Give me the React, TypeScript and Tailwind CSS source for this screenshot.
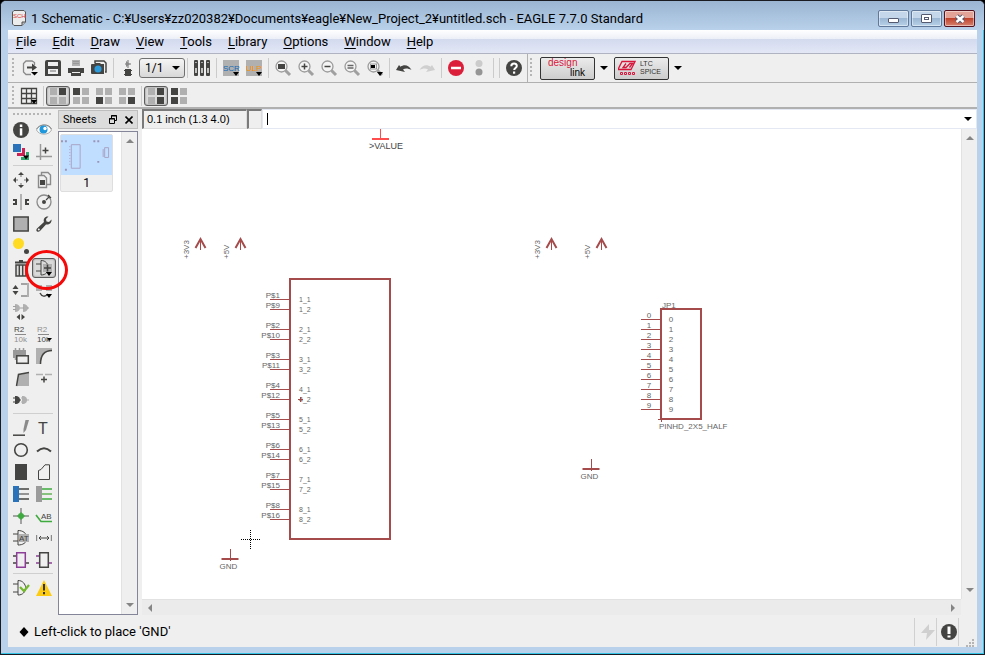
import { Fragment, type ReactNode } from "react";
import { clsx } from "clsx";

const DARK = "#444442";
const GRAY = "#b0b0b0";
const MID = "#8a8a8a";
const RED = "#a54b4b";
const GREEN = "#3faa3f";
const BLUE = "#2a72ba";
const PURPLE = "#8d3f97";

const menus = ["File", "Edit", "Draw", "View", "Tools", "Library", "Options", "Window", "Help"];

function Icon({ children }: { children: ReactNode }) {
  return (
    <svg viewBox="0 0 16 16" className="block size-4 shrink-0 overflow-visible" fill="none" aria-hidden="true">
      {children}
    </svg>
  );
}

function MoreArrow() {
  return <path d="M10 12h6l-3 4z" fill="#000" />;
}

function IconText({
  x,
  y,
  size,
  fill,
  children,
}: {
  x: number;
  y: number;
  size: number;
  fill: string;
  children: string;
}) {
  return (
    <text x={x} y={y} fontSize={size} fill={fill} fontFamily="Liberation Sans, sans-serif">
      {children}
    </text>
  );
}

function Lens({ children }: { children?: ReactNode }) {
  return (
    <Icon>
      <path d="M10.500 10.500l4.500 4.500" stroke="#a0a0a0" strokeWidth="3" />
      <circle cx="6.500" cy="6.500" r="5.500" fill="#f4f4f4" stroke="#9c9c9c" strokeWidth="1.300" />
      {children}
    </Icon>
  );
}

function Quad({ dark }: { dark: number[] }) {
  const cells = [
    [0, 0],
    [9, 0],
    [0, 9],
    [9, 9],
  ];
  return (
    <Icon>
      {cells.map(([x, y], i) => (
        <rect key={i} x={x} y={y} width="7" height="7" fill={dark.includes(i) ? DARK : GRAY} />
      ))}
    </Icon>
  );
}

const ic = {
  open: (
    <Icon>
      <path d="M12.500 5V2.500L10 1H4L1.500 3.500V12L4 14.500H9" stroke={MID} strokeWidth="1.300" />
      <path d="M5 6.500h5V3.500L15 7.500L10 11V8.500H5z" fill={DARK} />
      <path d="M9 12h7l-3.500 3.500z" fill="#000" />
    </Icon>
  ),
  save: (
    <Icon>
      <path d="M2 0h12a2 2 0 0 1 2 2v14H0V2a2 2 0 0 1 2-2z" fill={DARK} />
      <path d="M3 2h10v4H3zM3 9h10v5H3z" fill="#efefef" />
      <path d="M5 11h6" stroke={GRAY} strokeWidth="2" />
    </Icon>
  ),
  print: (
    <Icon>
      <path d="M4 0h8v6H4z" fill={GRAY} />
      <path d="M5 1.500h6M5 3.500h6" stroke="#999" />
      <path d="M0 8h16v5H0z" fill={DARK} />
      <path d="M3 11h10v5H3z" fill={DARK} />
      <path d="M4 12.500h8" stroke="#efefef" />
    </Icon>
  ),
  camera: (
    <Icon>
      <path d="M4 3V1h9l2 2v9h-1" stroke={DARK} strokeWidth="1.500" />
      <path d="M1 4h2l1-1h5l1 1h3v10H1a1 1 0 0 1-1-1V5a1 1 0 0 1 1-1z" fill={DARK} />
      <circle cx="7" cy="9" r="3.500" fill="#2c9bdc" />
    </Icon>
  ),
  chip: (
    <Icon>
      <path d="M8 0v8M5 4h6" stroke={GRAY} strokeWidth="2" />
      <path d="M6 1l4 3l-4 3z" fill={MID} />
      <path d="M5 9h6v7H5z" fill={DARK} />
      <path d="M4 10.500h8M4 14.500h8" stroke={DARK} />
    </Icon>
  ),
  library: (
    <Icon>
      {[0, 6, 12].map((x) => (
        <g key={x}>
          <rect x={x} width="4" height="16" rx="1" fill={DARK} />
          <path d={`M${x + 2} 8v5`} stroke="#eee" strokeWidth="1.500" />
          <path d={`M${x + 1} 2.500h2`} stroke="#aaa" />
        </g>
      ))}
    </Icon>
  ),
  script: (
    <Icon>
      <rect width="16" height="16" fill={GRAY} />
      <IconText x={0} y={11} size={8} fill="#1468b4">SCR</IconText>
      <MoreArrow />
    </Icon>
  ),
  ulp: (
    <Icon>
      <rect width="16" height="16" fill={GRAY} />
      <IconText x={0} y={11} size={8} fill="#ff9100">ULP</IconText>
      <MoreArrow />
    </Icon>
  ),
  zoomFit: (
    <Lens>
      <rect x="3" y="4" width="7" height="5" fill={DARK} />
    </Lens>
  ),
  zoomIn: (
    <Lens>
      <path d="M3.500 6.500h6M6.500 3.500v6" stroke={DARK} strokeWidth="1.500" />
    </Lens>
  ),
  zoomOut: (
    <Lens>
      <path d="M3.500 6.500h6" stroke={DARK} strokeWidth="1.500" />
    </Lens>
  ),
  redraw: (
    <Lens>
      <path d="M3.500 5.500h6M3.500 8h6" stroke="#666" strokeWidth="1.300" />
    </Lens>
  ),
  zoomSelect: (
    <Lens>
      <rect x="3.500" y="4" width="6" height="5" stroke="#999" />
      <rect x="4" y="5" width="4" height="3" fill="#000" />
      <MoreArrow />
    </Lens>
  ),
  undo: (
    <Icon>
      <path d="M0 8l3-5l1.500 1.800C8 2 13 3 15.500 8C12 6 9 6 7 7.500L9 10z" fill={DARK} transform="translate(0 2)" />
    </Icon>
  ),
  redo: (
    <Icon>
      <path d="M16 8l-3-5l-1.500 1.800C8 2 3 3 .5 8C4 6 7 6 9 7.500L7 10z" fill="#cfcfcf" transform="translate(0 2)" />
    </Icon>
  ),
  stop: (
    <Icon>
      <circle cx="8" cy="8" r="8" fill="#db1f3a" />
      <path d="M3 8h10" stroke="#fff" strokeWidth="2.500" />
    </Icon>
  ),
  go: (
    <Icon>
      <circle cx="8" cy="3.500" r="3.500" fill="#cbcbcb" />
      <circle cx="8" cy="12" r="3.500" fill="#959595" />
    </Icon>
  ),
  help: (
    <Icon>
      <circle cx="8" cy="8" r="8" fill={DARK} />
      <path d="M5.300 6.200C5.300 2.500 11 2.700 10.800 6C10.700 8 8.200 8 8.200 10" stroke="#fff" strokeWidth="2" />
      <rect x="7" y="11.500" width="2.200" height="2.200" fill="#fff" />
    </Icon>
  ),
  grid: (
    <Icon>
      <path d="M.5.5h15v15H.5zM5.500 0v16M10.500 0v16M0 5.500h16M0 10.500h16" stroke={DARK} strokeWidth="1.300" />
      <path d="M10 12h6l-3 4z" fill="#000" />
    </Icon>
  ),
  info: (
    <Icon>
      <circle cx="8" cy="8" r="8" fill={DARK} />
      <rect x="6.800" y="2.500" width="2.500" height="2.500" fill="#fff" />
      <rect x="6.800" y="6.300" width="2.500" height="7.200" fill="#fff" />
    </Icon>
  ),
  eye: (
    <Icon>
      <path d="M.5 8C3 1.500 13 1.500 15.500 8C13 13.500 3 13.500 .5 8z" fill="#fff" stroke="#aaa" />
      <path d="M.5 7C4 1.500 13 1.500 15.500 7" stroke="#888" />
      <circle cx="7.500" cy="7.500" r="4" fill="#1f97dc" />
      <circle cx="9" cy="6.500" r="1.700" fill="#fff" />
    </Icon>
  ),
  layers: (
    <Icon>
      <rect width="8" height="8" fill={BLUE} />
      <path d="M9 4h3v4h0v4H4V9h5z" fill="#cc2254" />
      <path d="M13 8h3v8H8v-3h5z" fill="#2ea56c" />
      <path d="M10 11.500h6l-3 4z" fill="#000" />
    </Icon>
  ),
  mark: (
    <Icon>
      <path d="M4.500 0v16M0 12.500h16" stroke="#999" strokeWidth="1.500" />
      <path d="M6.500 6.500h6M9.500 3.500v6" stroke={DARK} strokeWidth="1.500" />
    </Icon>
  ),
  move: (
    <Icon>
      <path d="M8 0l3 3H5zM8 16l3-3H5zM0 8l3-3v6zM16 8l-3-3v6z" fill={DARK} />
      <path d="M8 3v2M8 11v2M3 8h2M11 8h2" stroke={GRAY} strokeWidth="2" />
    </Icon>
  ),
  copy: (
    <Icon>
      <path d="M5.500 3V.5H12L14.500 3v9.500H11" stroke={MID} strokeWidth="1.400" />
      <path d="M2.500 3.500H8L10.500 6v9.500h-8z" fill="#efefef" stroke={MID} strokeWidth="1.400" />
      <rect x="4" y="8" width="5" height="5" fill={DARK} />
    </Icon>
  ),
  mirror: (
    <Icon>
      <path d="M8 0v16" stroke={MID} strokeWidth="1.200" />
      <path d="M0 5h4v6H0V9h2V7H0zM16 5h-4v6h4V9h-2V7h2z" fill={DARK} />
    </Icon>
  ),
  rotate: (
    <Icon>
      <circle cx="8" cy="8" r="7" stroke={MID} strokeWidth="1.300" />
      <circle cx="8" cy="8" r="2" fill={DARK} />
      <path d="M10 6l4-4M12 1l3 3" stroke={DARK} strokeWidth="1.200" />
    </Icon>
  ),
  group: (
    <Icon>
      <rect x=".8" y="1" width="14.400" height="14" fill={GRAY} stroke={DARK} strokeWidth="1.500" />
    </Icon>
  ),
  change: (
    <Icon>
      <path d="M15.500 3.500L13 6L10.500 5.500L10 3L12.500.5C9 0 7 3 8 6L1 12.500C-1 15 2 17 4 15L10 8.500C13 9 16 7 15.500 3.500z" fill={DARK} />
      <circle cx="2.800" cy="13.400" r="1" fill="#eee" />
    </Icon>
  ),
  paste: (
    <Icon>
      <circle cx="5.500" cy="5.500" r="5.500" fill="#ffdc23" />
      <circle cx="13.500" cy="13.500" r="2.500" fill={DARK} />
    </Icon>
  ),
  trash: (
    <Icon>
      <path d="M2 2.500h12M6 1h4" stroke={DARK} strokeWidth="2" />
      <path d="M3 5h10v11H3z" fill="#ddd" stroke={DARK} strokeWidth="1.500" />
      <path d="M6.300 5v11M9.700 5v11" stroke={DARK} strokeWidth="1.400" />
    </Icon>
  ),
  add: (
    <Icon>
      <path d="M0 4h5M0 11h5M5 .5C10 .5 12 4 12.500 8C12 12 10 15 5 15z" stroke={DARK} />
      <rect x="7" y="4" width="9" height="8" fill={GRAY} />
      <path d="M8 8h7M11.500 4.500v7" stroke={DARK} strokeWidth="1.600" />
      <MoreArrow />
    </Icon>
  ),
  pinswap: (
    <Icon>
      <path d="M2.500 3l3 4h-6zM2.500 13l3-4h-6z" fill={DARK} />
      <path d="M8 2h6M8 14h6" stroke={MID} strokeWidth="1.600" />
      <path d="M15 1v14" stroke={GRAY} strokeWidth="2" />
    </Icon>
  ),
  replace: (
    <Icon>
      <path d="M0 3h6v6H0zM10 3h6v6h-6z" fill={GRAY} />
      <path d="M4 11c2 4 5 4 8 1" stroke={DARK} strokeWidth="1.500" />
      <MoreArrow />
    </Icon>
  ),
  gateswap: (
    <Icon>
      <path d="M2 0c3 0 5 2 5 4s-2 4-5 4zM10 0c3 0 5 2 5 4s-2 4-5 4z" fill={GRAY} />
      <path d="M0 2.500h3M0 5.500h3M7 4h4M14 4h2" stroke="#a0a0a0" />
      <path d="M3.500 13l3.500-3v6zM12 13l-3.500-3v6z" fill={DARK} />
    </Icon>
  ),
  name: (
    <Icon>
      <IconText x={1} y={6} size={8} fill={DARK}>R2</IconText>
      <path d="M2 8.500h11" stroke={MID} />
      <IconText x={1} y={16} size={8} fill="#909090">10k</IconText>
    </Icon>
  ),
  value: (
    <Icon>
      <IconText x={1} y={6} size={8} fill="#909090">R2</IconText>
      <path d="M2 8.500h11" stroke={MID} />
      <IconText x={1} y={16} size={8} fill={DARK}>10k</IconText>
      <path d="M11 12h5l-2.500 3z" fill="#000" />
    </Icon>
  ),
  smash: (
    <Icon>
      <path d="M0 2h13v8H0z" fill="#999" />
      <path d="M2.500 0v12M6.500 0v12M10.500 0v4" stroke="#999" strokeWidth="1.500" />
      <rect x="3.800" y="7.800" width="11.500" height="7.500" fill="#eee" stroke={DARK} strokeWidth="1.500" />
    </Icon>
  ),
  miter: (
    <Icon>
      <path d="M0 0h16v3C8 3 5 8 5 16H0z" fill={GRAY} />
      <path d="M4.500 16C4.500 8 8 2.500 16 2.500" stroke={DARK} strokeWidth="1.500" />
    </Icon>
  ),
  split: (
    <Icon>
      <path d="M4 16L6 5l10-2v13z" fill={GRAY} />
      <path d="M3.500 16L5.500 4.500L16 2.500" stroke={DARK} strokeWidth="1.500" />
    </Icon>
  ),
  invoke: (
    <Icon>
      <path d="M0 4.500h7M9 4.500h7" stroke={GRAY} strokeWidth="1.300" />
      <path d="M5 9.500h6M8 6.500v6" stroke={DARK} strokeWidth="1.500" />
    </Icon>
  ),
  gates: (
    <Icon>
      <path d="M2 4c4 0 5 2 5 4s-1 4-5 4z" fill={DARK} />
      <path d="M0 6h3M0 10h3M6 8h2" stroke={DARK} strokeWidth="1.200" />
      <path d="M9 4c4 0 5 2 5 4s-1 4-5 4z" fill={GRAY} />
      <path d="M8 6h3M8 10h3M13 8h3" stroke={GRAY} strokeWidth="1.200" />
    </Icon>
  ),
  line: (
    <Icon>
      <path d="M0 15.200h12" stroke={DARK} strokeWidth="1.500" />
      <path d="M12.500 0h3.500l-3 10l-2.500 3v-4z" fill={MID} />
    </Icon>
  ),
  text: (
    <Icon>
      <IconText x={2} y={14} size={16} fill={DARK}>T</IconText>
    </Icon>
  ),
  circle: (
    <Icon>
      <circle cx="8" cy="8" r="6.300" stroke={DARK} strokeWidth="1.600" />
    </Icon>
  ),
  arc: (
    <Icon>
      <path d="M1 9.500Q8 3 15 9.500" stroke={DARK} strokeWidth="2" />
    </Icon>
  ),
  rect: (
    <Icon>
      <path d="M2 0h12v16H2z" fill={DARK} />
    </Icon>
  ),
  polygon: (
    <Icon>
      <path d="M2.500 15.500V6.500L5 5.500L9 .8H13.500V15.500z" stroke={DARK} />
    </Icon>
  ),
  bus: (
    <Icon>
      <path d="M0 0h6v16H0z" fill={BLUE} />
      <path d="M6 3h10M6 13h10" stroke={DARK} strokeWidth="1.400" />
      <path d="M6 8h10" stroke={MID} strokeWidth="1.800" />
    </Icon>
  ),
  net: (
    <Icon>
      <path d="M0 0h6v16H0z" fill="#9b9b9b" />
      <path d="M6 3h10M6 13h10" stroke={GREEN} strokeWidth="1.400" />
      <path d="M6 8h10" stroke="#7cbd72" strokeWidth="1.800" />
    </Icon>
  ),
  junction: (
    <Icon>
      <path d="M0 8h16M8 0v16" stroke={MID} strokeWidth="1.500" />
      <path d="M8 4v8M4 8h8" stroke={GREEN} />
      <circle cx="8" cy="8" r="3" fill={GREEN} />
    </Icon>
  ),
  label: (
    <Icon>
      <path d="M0 7L5 13.500H16" stroke={GREEN} strokeWidth="1.600" />
      <IconText x={5} y={11} size={8} fill={DARK}>AB</IconText>
    </Icon>
  ),
  attribute: (
    <Icon>
      <path d="M0 4h5M0 11h5M5 .5C10 .5 13 3 15 8C13 13 10 15 5 15z" stroke={DARK} />
      <path d="M6 4h10v8H6z" fill={GRAY} />
      <IconText x={6} y={11} size={8} fill={DARK}>AT</IconText>
    </Icon>
  ),
  dimension: (
    <Icon>
      <path d="M.6 5v6M15.400 5v6" stroke={MID} strokeWidth="1.200" />
      <path d="M3 8h10M5 6L3 8l2 2M11 6l2 2l-2 2" stroke={DARK} />
    </Icon>
  ),
  module: (
    <Icon>
      <path d="M3.700.8h8.600v14.400H3.700z" stroke={PURPLE} strokeWidth="1.500" />
      <path d="M0 4h3M0 11h3M13 11h3" stroke={DARK} strokeWidth="1.500" />
    </Icon>
  ),
  port: (
    <Icon>
      <path d="M3.700.8h8.600v14.400H3.700z" stroke={DARK} strokeWidth="1.500" />
      <path d="M0 4h3M0 11h3M13 11h3" stroke={PURPLE} strokeWidth="1.500" />
    </Icon>
  ),
  erc: (
    <Icon>
      <path d="M0 4h5M0 12h5M5 .5C10 .5 12 4 13 8C12 12 10 15 5 15z" stroke={DARK} />
      <path d="M7 7l4 4l5-6" stroke="#74b82c" strokeWidth="2.200" />
    </Icon>
  ),
  errors: (
    <Icon>
      <path d="M8 0L16 16H0z" fill="#fdcb12" />
      <path d="M8 4v6.500M8 12v2.300" stroke="#333" strokeWidth="2" />
    </Icon>
  ),
};

type IconName = keyof typeof ic;

const fileTools: (IconName | "|" | "select")[] = [
  "open", "save", "print", "camera", "|", "chip", "select", "|", "library", "|",
  "script", "ulp", "|", "zoomFit", "zoomIn", "zoomOut", "redraw", "zoomSelect", "|",
  "undo", "redo", "|", "stop", "go", "|", "|", "help",
];

const sideTools: (IconName | null)[][][] = [
  [["info", "eye"], ["layers", "mark"]],
  [
    ["move", "copy"],
    ["mirror", "rotate"],
    ["group", "change"],
    ["paste", null],
    ["trash", "add"],
    ["pinswap", "replace"],
    ["gateswap", null],
    ["name", "value"],
    ["smash", "miter"],
    ["split", "invoke"],
    ["gates", null],
  ],
  [
    ["line", "text"],
    ["circle", "arc"],
    ["rect", "polygon"],
    ["bus", "net"],
    ["junction", "label"],
    ["attribute", "dimension"],
    ["module", "port"],
  ],
  [["erc", "errors"]],
];

function ToolButton({
  label,
  pressed,
  children,
}: {
  label: string;
  pressed?: boolean;
  children: ReactNode;
}) {
  return (
    <button
      type="button"
      aria-label={label}
      aria-pressed={pressed}
      className={clsx(
        "shrink-0",
        pressed &&
          "-mx-1 rounded-[3px] border border-[#5c5c5c] bg-[#dadada] px-[3px] py-px shadow-[inset_0_0_2px_#777]",
      )}
    >
      {children}
    </button>
  );
}

function Separator() {
  return <span className="-mx-px h-5 w-px shrink-0 bg-[#cbcbcb]" />;
}

function Grip() {
  return (
    <span className="h-5 w-[2px] shrink-0 bg-[repeating-linear-gradient(#b5b5b5_0_2px,transparent_2px_4px)]" />
  );
}

function Caret({ className }: { className?: string }) {
  return (
    <svg viewBox="0 0 8 4" className={clsx("h-1 w-2 shrink-0", className)} aria-hidden="true">
      <path d="M0 0h8L4 4z" fill="currentColor" />
    </svg>
  );
}

function TitleBar() {
  const button =
    "flex h-[17px] w-[31px] items-center justify-center rounded-[2px] border shadow-[inset_0_0_0_1px_rgba(255,255,255,0.45)]";
  const blue =
    "border-[#60789a] bg-[linear-gradient(#c3d6ea_50%,#9bb7d3_50%,#b7d0e8)]";
  return (
    <header className="flex h-[29px] shrink-0 items-center bg-linear-to-b from-[#9ab4d2] to-[#b9d1ea] pr-[9px] pl-[11px]">
      <svg viewBox="0 0 14 16" className="mt-1 h-4 w-[14px] shrink-0 overflow-visible" aria-hidden="true">
        <path d="M2 .5h10l1.500 1.500V12L10 15.500H2L.5 14V2z" fill="#ececec" stroke="#555" />
        <path d="M10 15.500V12h3.500" fill="#bbb" stroke="#555" />
        <text x="1" y="8" fontSize="6" fill="#d83a3a" fontFamily="Liberation Sans, sans-serif">
          SCH
        </text>
      </svg>
      <h1 className="ml-[5px] flex-1 truncate pt-[6px] text-[13px] leading-5">
        1 Schematic - C:¥Users¥zz020382¥Documents¥eagle¥New_Project_2¥untitled.sch - EAGLE 7.7.0 Standard
      </h1>
      <div className="mt-[6px] flex gap-[2px]">
        <button type="button" aria-label="Minimize" className={clsx(button, blue)}>
          <span className="mt-1 h-[5px] w-[11px] rounded-[1px] border border-[#555a70] bg-white" />
        </button>
        <button type="button" aria-label="Maximize" className={clsx(button, blue)}>
          <span className="flex h-[9px] w-[11px] items-center justify-center rounded-[1px] border border-[#555a70] bg-white">
            <span className="h-[3px] w-[5px] border border-[#555a70]" />
          </span>
        </button>
        <button
          type="button"
          aria-label="Close"
          className={clsx(button, "border-[#56131f] bg-[linear-gradient(#e3a397_50%,#c0422b_50%,#d68370)]")}
        >
          <svg viewBox="0 0 12 10" className="h-[10px] w-3" aria-hidden="true">
            <path d="M2.500 2l7 6M9.500 2l-7 6" stroke="#555a70" strokeWidth="4.500" />
            <path d="M2.500 2l7 6M9.500 2l-7 6" stroke="#fff" strokeWidth="2.500" />
          </svg>
        </button>
      </div>
    </header>
  );
}

function MenuBar() {
  return (
    <nav className="flex h-6 shrink-0 gap-4 border-b border-[#b0b4c2] bg-[linear-gradient(#fff,#eceff7_9px,#d3daee_9px,#e3e7f6)] pl-2">
      {menus.map((menu) => (
        <button key={menu} type="button" className="text-[13px] leading-6">
          <span className="underline underline-offset-2">{menu[0]}</span>
          {menu.slice(1)}
        </button>
      ))}
    </nav>
  );
}

function FileToolbar() {
  const brand =
    "h-[23px] w-[55px] rounded-[2px] border border-[#333] bg-linear-to-b from-[#ebebeb] to-[#cdcdcd] font-['Liberation_Sans',sans-serif]";
  return (
    <div className="flex h-[29px] shrink-0 items-center border-b border-[#b0b0b0] pl-1">
      <Grip />
      <div className="ml-2 flex items-center gap-[7px]">
        {fileTools.map((tool, i) => {
          if (tool === "|") return <Separator key={i} />;
          if (tool === "select") {
            return (
              <div key={i} className="relative -mx-1 flex items-center">
                <select
                  aria-label="Sheet"
                  className="h-5 w-[46px] appearance-none rounded-[3px] border border-[#707070] bg-linear-to-b from-[#f5f5f5] to-[#d8d8d8] pl-[5px] text-xs leading-4"
                >
                  <option>1/1</option>
                </select>
                <Caret className="pointer-events-none absolute right-[5px]" />
              </div>
            );
          }
          return (
            <ToolButton key={i} label={tool}>
              {ic[tool]}
            </ToolButton>
          );
        })}
      </div>
      <span className="mr-[2px] ml-[5px] h-full w-px bg-[#b0b0b0]" />
      <Grip />
      <button type="button" className={clsx(brand, "ml-2 pl-[7px] text-left text-[10px]")}>
        <span className="block leading-[10px] text-[#d8163c]">design</span>
        <span className="block pl-[22px] leading-[10px]">link</span>
      </button>
      <button type="button" aria-label="Design link options" className="ml-[5px]">
        <Caret />
      </button>
      <button type="button" className={clsx(brand, "ml-[6px] flex items-center gap-1 pl-[3px] text-left text-[7px] text-[#333]")}>
        <svg viewBox="0 0 18 16" className="h-4 w-[18px] shrink-0" fill="none" stroke="#d8163c" aria-hidden="true">
          <path d="M4 1.500h13l-4 8H0zM8 3.500L5 7.500h3l4-4h2.500l-3 4" strokeWidth="1.300" />
          <path d="M2.500 12.500h2v2h-2zM6.500 12.500h2v2h-2zM10.500 12.500h2v2h-2zM14.500 12.500h2v2h-2z" />
        </svg>
        <span>
          <span className="block leading-[8px]">LTC</span>
          <span className="block leading-[8px]">SPICE</span>
        </span>
      </button>
      <button type="button" aria-label="LTC Spice options" className="ml-[5px]">
        <Caret />
      </button>
    </div>
  );
}

function GridToolbar() {
  return (
    <div className="flex h-[26px] shrink-0 items-center border-b-2 border-[#b0b0b0] pt-[2px] pl-1">
      <Grip />
      <div className="ml-[7px] flex items-center gap-[7px]">
        <ToolButton label="grid">{ic.grid}</ToolButton>
        <Separator />
        <ToolButton label="Quadrant 1" pressed>
          <Quad dark={[1]} />
        </ToolButton>
        <ToolButton label="Quadrant 2">
          <Quad dark={[0]} />
        </ToolButton>
        <ToolButton label="Quadrant 3">
          <Quad dark={[2]} />
        </ToolButton>
        <ToolButton label="Quadrant 4">
          <Quad dark={[3]} />
        </ToolButton>
        <Separator />
        <ToolButton label="Right half" pressed>
          <Quad dark={[1, 3]} />
        </ToolButton>
        <ToolButton label="Left half">
          <Quad dark={[0, 2]} />
        </ToolButton>
      </div>
    </div>
  );
}

function SideToolbar() {
  return (
    <aside className="w-[50px] shrink-0 px-[5px] pt-1">
      <div className="mb-1 h-[2px] bg-[repeating-linear-gradient(90deg,#b5b5b5_0_2px,transparent_2px_4px)]" />
      {sideTools.map((group, g) => (
        <Fragment key={g}>
          {g > 0 && <hr className="mt-[2px] mb-[3px] border-[#cfcfcf]" />}
          {group.map((row, r) => (
            <div key={r} className="flex h-[22px] items-center gap-[7px]">
              {row.map((tool) => {
                if (!tool) return null;
                if (tool !== "add") {
                  return (
                    <ToolButton key={tool} label={tool}>
                      {ic[tool]}
                    </ToolButton>
                  );
                }
                return (
                  <div key={tool} className="relative flex">
                    <ToolButton label={tool} pressed>
                      {ic.add}
                    </ToolButton>
                    <span className="pointer-events-none absolute -top-2 -left-[11px] z-10 h-10 w-[43px] rounded-[50%] border-3 border-[#f50a0a]" />
                  </div>
                );
              })}
            </div>
          ))}
        </Fragment>
      ))}
    </aside>
  );
}

function ScrollArrow({ d }: { d: string }) {
  return (
    <svg viewBox="0 0 8 8" className="size-2" aria-hidden="true">
      <path d={d} fill="#858585" />
    </svg>
  );
}

function VerticalScroll() {
  return (
    <div className="flex w-4 shrink-0 flex-col items-center justify-between border-l border-[#e2e2e2] bg-[#efefef] py-[5px]">
      <ScrollArrow d="M0 6h8L4 2z" />
      <ScrollArrow d="M0 2h8L4 6z" />
    </div>
  );
}

function SheetsPanel() {
  return (
    <section className="flex w-20 shrink-0 flex-col">
      <div className="mt-px flex h-[19px] items-center border border-[#bdbdbd] bg-[#dcdcdc] pr-1 pl-1">
        <h2 className="flex-1 text-[11px] leading-4">Sheets</h2>
        <button type="button" aria-label="Float" className="mr-2">
          <svg viewBox="0 0 8 9" className="h-[9px] w-2" fill="none" stroke="#000" aria-hidden="true">
            <path d="M2.500 3V.5h5v5H6M2 1h6" />
            <path d="M.5 3.500h5v5h-5zM0 4h6" />
          </svg>
        </button>
        <button type="button" aria-label="Close sheets">
          <svg viewBox="0 0 8 8" className="size-2" stroke="#000" strokeWidth="1.600" aria-hidden="true">
            <path d="M.5.5l7 7M7.500.5l-7 7" />
          </svg>
        </button>
      </div>
      <div className="mt-[2px] flex flex-1 justify-between border border-[#85859a] bg-white">
        <button type="button" className="mt-[2px] ml-px h-[58px] w-[53px] rounded-[2px] border border-[#dedede] bg-[#efefef]">
          <svg viewBox="0 0 52 40" className="block h-10 w-full bg-[#c0deff]" fill="none" stroke="#a9a3c6" aria-hidden="true">
            <path d="M10.500 9.500h9v24h-9z" />
            <path d="M9 11v21" strokeDasharray="1 2" />
            <path d="M44.500 12.500h4v10h-4zM43 14v8" />
            <path d="M0 6h2M4 6h2M33 6h2M37 6h2M4 35h2M37 27h2" stroke="#9a95b8" strokeWidth="2" />
          </svg>
          <span className="block text-xs leading-4">1</span>
        </button>
        <VerticalScroll />
      </div>
    </section>
  );
}

function SupplyArrow({ x, label }: { x: number; label: string }) {
  return (
    <g>
      <path d={`M${x} 109v12`} stroke={RED} />
      <path d={`M${x - 5} 119l5-9l5 9`} fill="none" stroke={RED} strokeWidth="2" />
      <text transform={`translate(${x - 12} 130) rotate(-90)`}>{label}</text>
    </g>
  );
}

function Ground({ x, y, label }: { x: number; y: number; label: string }) {
  return (
    <g>
      <path d={`M${x} ${y - 10}v12`} stroke={RED} />
      <path d={`M${x - 9} ${y}h17`} stroke={RED} strokeWidth="2" />
      <text x={x - 11} y={y + 10}>
        {label}
      </text>
    </g>
  );
}

function Schematic() {
  return (
    <svg
      width="818"
      height="470"
      className="block shrink-0"
      fontSize="8"
      fontFamily="Liberation Sans, sans-serif"
      role="img"
      aria-label="Schematic"
    >
      <g fill="#666">
        <path d="M238.500 0v10" stroke="#ff4d4d" />
        <path d="M230 10h17" stroke="#ff4d4d" strokeWidth="2" />
        <text x="227" y="20" fontSize="9" fill="#444">
          &gt;VALUE
        </text>

        <SupplyArrow x={58.5} label="+3V3" />
        <SupplyArrow x={98.5} label="+5V" />
        <SupplyArrow x={409.5} label="+3V3" />
        <SupplyArrow x={459.5} label="+5V" />

        <rect x="148" y="150" width="100" height="260" fill="none" stroke={RED} strokeWidth="2" />
        {Array.from({ length: 8 }, (_, i) => {
          const y = 170 + i * 30;
          return (
            <g key={i}>
              <path d={`M128 ${y + 0.5}h19M128 ${y + 10.5}h19`} stroke={RED} />
              <text x="138" y={y - 1} textAnchor="end">{`P$${i + 1}`}</text>
              <text x="138" y={y + 9} textAnchor="end">{`P$${i + 9}`}</text>
              <text x="157" y={y + 3} fontSize="7">{`${i + 1}_1`}</text>
              <text x="157" y={y + 13} fontSize="7">{`${i + 1}_2`}</text>
            </g>
          );
        })}
        <path d="M156 270.500h5M158.500 268v5" stroke={RED} />

        <rect x="519" y="180" width="40" height="110" fill="none" stroke={RED} strokeWidth="2" />
        {Array.from({ length: 10 }, (_, i) => {
          const y = 190 + i * 10;
          return (
            <g key={i} textAnchor="middle">
              <path d={`M499 ${y + 0.5}h19`} stroke={RED} />
              <text x="507" y={y - 1}>{i}</text>
              <text x="529" y={y + 3}>{i}</text>
            </g>
          );
        })}
        <text x="520" y="179">JP1</text>
        <path d="M516 290.500h5M519.500 288v5" stroke={RED} />
        <text x="517" y="300">PINHD_2X5_HALF</text>

        <Ground x={88.5} y={430} label="GND" />
        <Ground x={449.5} y={340} label="GND" />
        <path d="M99 410.500h20M108.500 401v20" stroke="#000" strokeDasharray="1 1" />
      </g>
    </svg>
  );
}

function Editor() {
  const sunken = "border-t-2 border-l-2 border-r border-b border-t-[#7a7a7a] border-l-[#7a7a7a] border-r-[#dcdcdc] border-b-[#dcdcdc]";
  return (
    <main className="ml-1 flex min-w-0 flex-1 flex-col">
      <div className="flex h-5 shrink-0">
        <output className={clsx(sunken, "w-[105px] pl-[3px] font-['Liberation_Sans',sans-serif] text-[11px] leading-4")}>
          0.1 inch (1.3 4.0)
        </output>
        <span className={clsx(sunken, "w-[15px]")} />
        <div className="flex flex-1 items-center border border-[#e3e8f2] bg-white pr-1 pl-1">
          <span className="h-3 w-px bg-black" />
          <input aria-label="Command" className="min-w-0 flex-1 text-xs leading-4 outline-none" />
          <button type="button" aria-label="Command history">
            <Caret />
          </button>
        </div>
      </div>
      <div className="flex min-h-0 flex-1">
        <div className="min-w-0 flex-1 overflow-hidden bg-white">
          <Schematic />
        </div>
        <VerticalScroll />
      </div>
      <div className="mr-4 flex h-4 shrink-0 items-center justify-between border-t border-[#e2e2e2] bg-[#ebebeb] px-1">
        <ScrollArrow d="M6 0v8L2 4z" />
        <ScrollArrow d="M2 0v8L6 4z" />
      </div>
    </main>
  );
}

function StatusBar() {
  return (
    <footer className="flex h-8 shrink-0 items-center pt-px pl-[11px]">
      <svg viewBox="0 0 10 10" className="size-[10px]" aria-hidden="true">
        <path d="M5 0l4.500 5L5 10L.5 5z" fill="#000" />
      </svg>
      <p className="ml-[5px] flex-1 text-[13px] leading-5">Left-click to place 'GND'</p>
      <div className="flex h-7 w-[22px] items-center justify-center border-l border-[#d0d0d0] pl-1">
        <svg viewBox="0 0 14 16" className="h-4 w-[14px]" aria-hidden="true">
          <path d="M8 0L0 9h6l-1 7l9-10H8z" fill="#cfcfcf" />
        </svg>
      </div>
      <div className="flex h-7 w-[23px] items-center justify-center border-x border-[#d0d0d0] pl-[3px]">
        <Icon>
          <circle cx="8" cy="8" r="8" fill={DARK} />
          <path d="M6.500 2.500h3v7.500h-3zM6.500 11.500h3v2h-3z" fill="#fff" />
        </Icon>
      </div>
      <svg viewBox="0 0 8 8" className="mr-[3px] ml-[7px] size-2 self-end" fill="#b5b5b5" aria-hidden="true">
        <path d="M6 0h2v2H6zM3 3h2v2H3zM6 3h2v2H6zM0 6h2v2H0zM3 6h2v2H3zM6 6h2v2H6z" />
      </svg>
    </footer>
  );
}

export default function App() {
  return (
    <div className="h-screen bg-black font-[Roboto,'Noto_Sans_CJK_JP',sans-serif] text-black">
      <div className="flex h-full flex-col overflow-hidden rounded-t-md border border-[#1a1a22] bg-[#b9d1ea]">
        <TitleBar />
        <div className="flex min-h-0 flex-1 flex-col border-r border-b border-[#35c3e6] pr-[6px] pb-[6px] pl-[7px]">
          <div className="flex min-h-0 flex-1 flex-col bg-[#efefef]">
            <MenuBar />
            <FileToolbar />
            <GridToolbar />
            <div className="flex min-h-0 flex-1">
              <SideToolbar />
              <SheetsPanel />
              <Editor />
            </div>
            <StatusBar />
          </div>
        </div>
      </div>
    </div>
  );
}
